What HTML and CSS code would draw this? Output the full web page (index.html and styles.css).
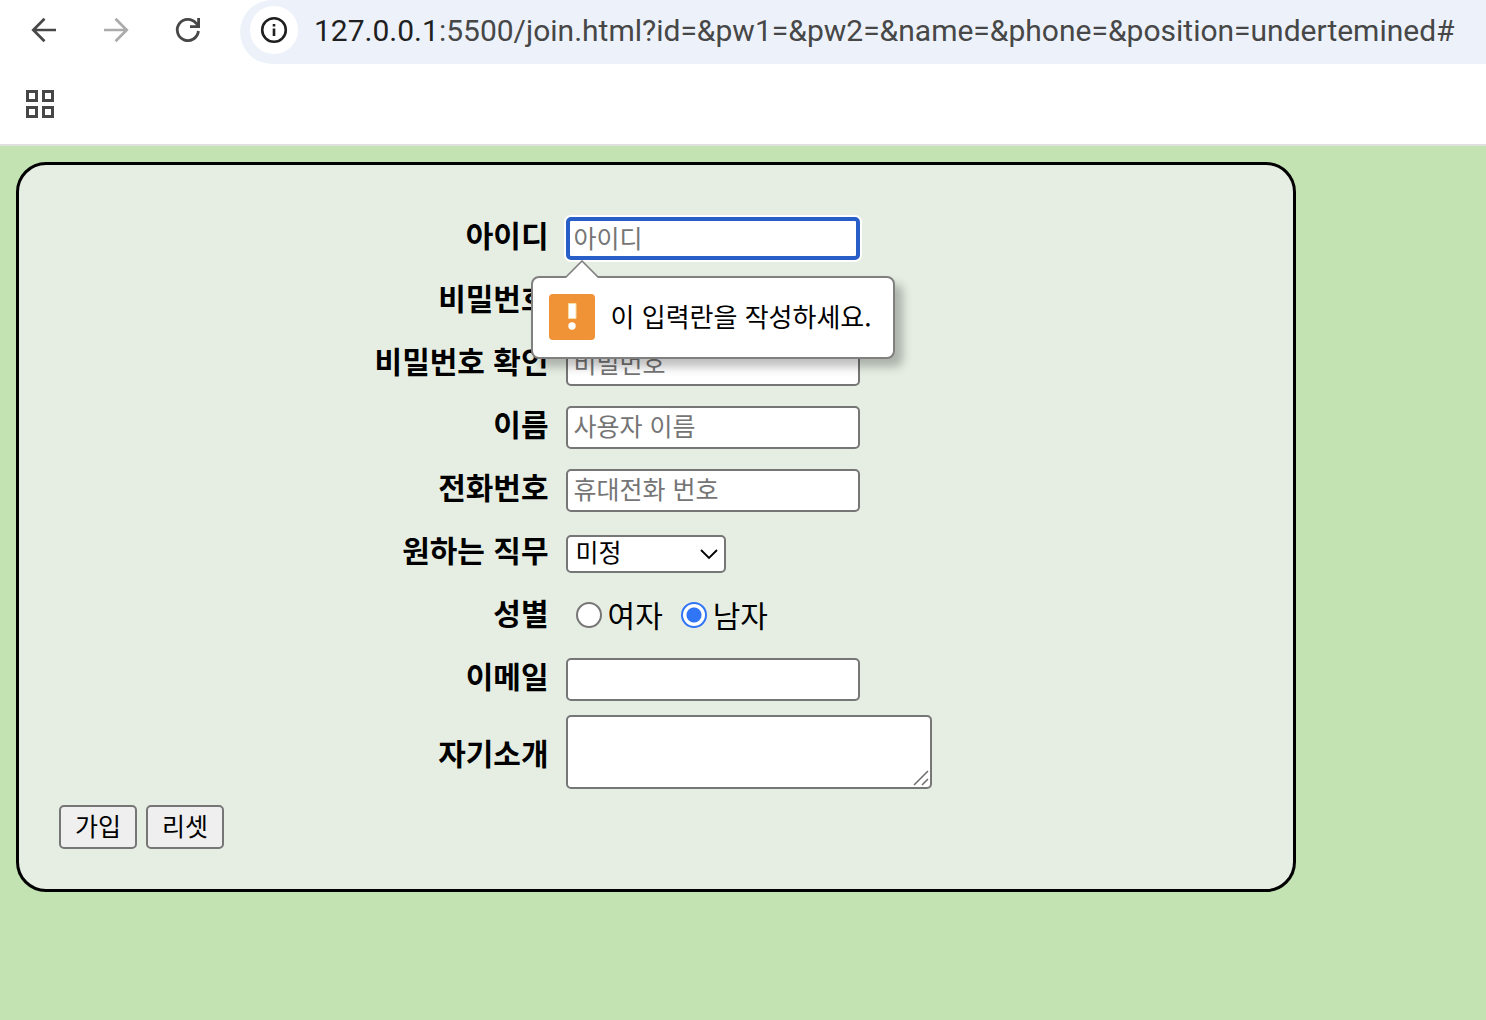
FILE: index.html
```html
<!DOCTYPE html>
<html lang="ko">
<head>
<meta charset="utf-8">
<title>회원 가입</title>
<link rel="stylesheet" href="styles.css">
</head>
<body>
<header class="browser">
  <div class="toolbar">
    <nav class="nav">
      <button class="nav-btn" type="button" aria-label="뒤로"><svg width="28" height="28" viewBox="0 0 28 28" fill="none" stroke="#474747" stroke-width="2.7"><path d="M26 14H4M14.5 2.8 3.3 14l11.2 11.2"/></svg></button>
      <button class="nav-btn" type="button" aria-label="앞으로"><svg width="28" height="28" viewBox="0 0 28 28" fill="none" stroke="#ababab" stroke-width="2.7"><path d="M2 14h22M13.5 2.8 24.7 14 13.5 25.2"/></svg></button>
      <button class="nav-btn" type="button" aria-label="새로고침"><svg width="28" height="28" viewBox="0 0 28 28" fill="none" stroke="#474747" stroke-width="2.8"><path d="M24.4 15A10.6 10.6 0 1 1 22.2 7.4L25 10.2M24.6 2v8.6H16"/></svg></button>
    </nav>
    <div class="address">
      <button class="site-info" type="button" aria-label="사이트 정보"><svg width="28" height="28" viewBox="0 0 28 28"><circle cx="14" cy="14" r="11.8" fill="none" stroke="#1f1f1f" stroke-width="2.6"/><path d="M12.7 12.5h2.6V20h-2.6zM12.7 8h2.6v2.6h-2.6z" fill="#1f1f1f"/></svg></button>
      <span class="url"><span class="host">127.0.0.1</span>:5500/join.html?id=&amp;pw1=&amp;pw2=&amp;name=&amp;phone=&amp;position=undertemined#</span>
    </div>
  </div>
  <div class="bookmarks">
    <button class="nav-btn" type="button" aria-label="앱"><svg width="28" height="28" viewBox="0 0 28 28" fill="none" stroke="#474747" stroke-width="3"><path d="M1.5 1.5h9v9h-9zM17.5 1.5h9v9h-9zM1.5 17.5h9v9h-9zM17.5 17.5h9v9h-9z"/></svg></button>
  </div>
</header>
<main class="page">
  <form class="card">
    <div class="row">
      <label class="label" for="id">아이디</label>
      <div class="control">
        <input class="field field-active" id="id" type="text" placeholder="아이디">
        <div class="bubble" role="alert">
          <svg class="bubble-arrow" width="36" height="18" viewBox="0 0 36 18"><path d="M1 18 18 1l17 17" fill="#fff" stroke="#808080" stroke-width="1.6"/></svg>
          <svg width="46" height="46" viewBox="0 0 46 46"><rect width="46" height="46" rx="4" fill="#f09236"/><path d="M19.5 9.5h7.500v15h-7.500z" fill="#fff" stroke="#f9dca0" stroke-width="1"/><circle cx="23" cy="32" r="3.700" fill="#fff"/></svg>
          <span class="bubble-text">이 입력란을 작성하세요.</span>
        </div>
      </div>
    </div>
    <div class="row">
      <label class="label" for="pw1">비밀번호</label>
      <div class="control"><input class="field" id="pw1" type="password" placeholder="비밀번호"></div>
    </div>
    <div class="row">
      <label class="label" for="pw2">비밀번호 확인</label>
      <div class="control"><input class="field" id="pw2" type="password" placeholder="비밀번호"></div>
    </div>
    <div class="row">
      <label class="label" for="name">이름</label>
      <div class="control"><input class="field" id="name" type="text" placeholder="사용자 이름"></div>
    </div>
    <div class="row">
      <label class="label" for="phone">전화번호</label>
      <div class="control"><input class="field" id="phone" type="tel" placeholder="휴대전화 번호"></div>
    </div>
    <div class="row">
      <label class="label" for="position">원하는 직무</label>
      <div class="control">
        <select class="select" id="position"><option>미정</option></select>
        <svg class="chevron" width="20" height="12" viewBox="0 0 20 12" fill="none" stroke="#000" stroke-width="1.8"><path d="m2 2 8 8 8-8"/></svg>
      </div>
    </div>
    <div class="row" role="radiogroup" aria-labelledby="gender">
      <span class="label" id="gender">성별</span>
      <div class="control choices">
        <label class="choice"><input class="radio" type="radio" name="gender"><span class="choice-text">여자</span></label>
        <label class="choice"><input class="radio" type="radio" name="gender" checked><span class="choice-text">남자</span></label>
      </div>
    </div>
    <div class="row">
      <label class="label" for="email">이메일</label>
      <div class="control"><input class="field" id="email" type="email"></div>
    </div>
    <div class="row row-tall">
      <label class="label" for="intro">자기소개</label>
      <div class="control">
        <textarea class="area" id="intro"></textarea>
        <svg class="grip" width="16" height="16" viewBox="0 0 16 16" stroke="#6b6b6b" stroke-width="1.500"><path d="M1 15 15 1M9 15l6-6"/></svg>
      </div>
    </div>
    <div class="actions">
      <button class="btn" type="submit">가입</button>
      <button class="btn" type="reset">리셋</button>
    </div>
  </form>
</main>
</body>
</html>
```
FILE: styles.css
```css
* { box-sizing: border-box; }

body {
  margin: 0;
  min-height: 100vh;
  display: flex;
  flex-direction: column;
  background: #c4e3b3;
  color: #000;
  font-family: "Noto Sans CJK KR", sans-serif;
  font-size: 30px;
}

button, input, select, textarea { font-family: inherit; font-size: 25px; color: inherit; }
svg { display: block; flex: none; }

.browser { background: #fff; border-bottom: 2px solid #dfe1e0; }
.toolbar { display: flex; height: 64px; }
.nav { display: flex; gap: 44px; padding: 16px 38px 0 30px; align-items: flex-start; }
.nav-btn { border: 0; padding: 0; background: none; }
.address {
  flex: 1;
  display: flex;
  align-items: center;
  gap: 16px;
  padding: 0 10px 4px;
  background: #edf2fa;
  border-radius: 32px 0 0 32px;
  min-width: 0;
}
.site-info {
  display: grid;
  place-items: center;
  flex: none;
  width: 48px;
  height: 48px;
  padding: 0;
  border: 0;
  border-radius: 50%;
  background: #fff;
}
.url { font-family: Roboto, sans-serif; font-size: 30px; color: #474747; white-space: nowrap; }
.host { color: #1f1f1f; }
.bookmarks { display: flex; align-items: flex-start; height: 80px; padding: 26px; }

.page { flex: 1; padding: 16px; }
.card {
  max-width: 1280px;
  padding: 42px 40px 40px;
  border: 3px solid #000;
  border-radius: 30px;
  background: #e6eee3;
}
.row { display: grid; grid-template-columns: 41% 1fr; column-gap: 17px; align-items: center; height: 63px; }
.row-tall { height: 82px; }
.label { font-weight: 700; text-align: right; line-height: 40px; padding-bottom: 10px; }
.row-tall .label { padding-bottom: 0; }
.control { position: relative; display: flex; }

.field, .select, .area { border: 2px solid #767676; border-radius: 5px; background: #fff; }
.field { width: 294px; height: 43px; padding: 0 6px 6px; }
.field::placeholder { color: #757575; opacity: 1; }
.field-active { border: 4px solid #275ec8; padding: 0 4px 4px; line-height: 30px; box-shadow: 0 0 0 2px #fff; }
.select { appearance: none; width: 160px; height: 38px; padding: 0 8px 6px; line-height: 28px; }
.chevron { position: absolute; left: 133px; top: 13px; pointer-events: none; }
.area { width: 366px; height: 74px; resize: none; }
.grip { position: absolute; left: 347px; top: 55px; pointer-events: none; }

.choices { gap: 18px; padding: 0 0 4px 10px; }
.choice { display: flex; align-items: center; gap: 6px; line-height: 40px; }
.choice-text { padding-bottom: 2px; }
.radio { appearance: none; width: 26px; height: 26px; margin: 0; border: 2px solid #767676; border-radius: 50%; background: #fff; }
.radio:checked { border-color: #3075f6; background: radial-gradient(circle, #3075f6 7px, #fff 8px); }

.bubble {
  position: absolute;
  z-index: 1;
  left: -35px;
  top: 59px;
  display: flex;
  align-items: center;
  gap: 16px;
  width: 364px;
  height: 83px;
  padding: 0 16px 2px;
  border: 2px solid #808080;
  border-radius: 8px;
  background: #fff;
  box-shadow: 8px 8px 10px rgba(0, 0, 0, 0.25);
  font-size: 26px;
  line-height: 40px;
  white-space: nowrap;
}
.bubble-arrow { position: absolute; left: 31px; top: -18px; }
.bubble-text { padding-bottom: 2px; }

.actions { display: flex; gap: 9px; margin-top: 12px; }
.btn { width: 78px; height: 44px; padding: 0 0 6px; border: 2px solid #767676; border-radius: 5px; background: #efefef; }
```
